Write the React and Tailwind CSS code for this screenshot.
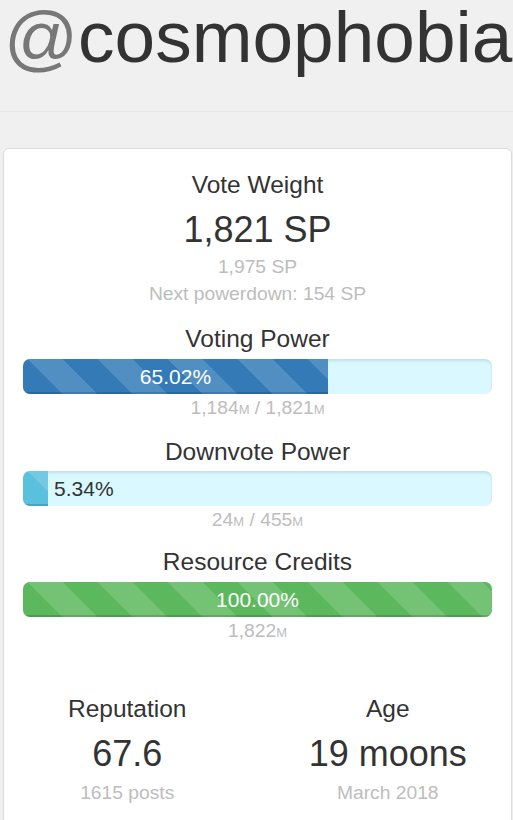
import React from 'react';

const stripes =
  'bg-[linear-gradient(45deg,rgba(255,255,255,.15)_25%,transparent_25%,transparent_50%,rgba(255,255,255,.15)_50%,rgba(255,255,255,.15)_75%,transparent_75%,transparent)] bg-[length:70px_70px] bg-[position:4px_0]';

const Unit = () => <span className="text-[13px]">M</span>;

const Bar = ({ pct, label, color, inside = true }) => (
  <div className="flex h-[35px] w-full overflow-hidden rounded-[7px] bg-[#d9f8ff] shadow-[inset_0_2px_3px_rgba(0,0,0,0.1)]">
    <div
      className={`${color} ${stripes} h-full shrink-0 text-center text-[21px] leading-[35px] text-white shadow-[inset_0_-2px_0_rgba(0,0,0,0.15)]`}
      style={{ width: `${pct}%` }}
    >
      {inside && label}
    </div>
    {!inside && <span className="pl-[6px] text-[21px] leading-[35px] text-[#333]">{label}</span>}
  </div>
);

const Muted = ({ children, className = '' }) => (
  <div className={`text-[19.25px] leading-[27.5px] text-[#bdbdbd] ${className}`}>{children}</div>
);

const Title = ({ children, className = '' }) => (
  <div className={`text-[24.5px] leading-[35px] text-[#333] ${className}`}>{children}</div>
);

const Big = ({ children, className = '' }) => (
  <div className={`text-[36px] leading-[40px] text-[#333] ${className}`}>{children}</div>
);

export default function App() {
  return (
    <div className="min-h-screen overflow-hidden bg-[#f0f0f0] font-['Liberation_Sans',Arial,sans-serif]">
      <h1 className="h-[73px] whitespace-nowrap pl-[4px] text-[73px] leading-[73px] text-[#333]">
        <span className="text-[#777]">@</span>cosmophobia
      </h1>
      <div className="mt-[38px] h-px bg-[#e6e6e6]" />

      <div className="ml-[3px] mr-[1px] mt-[36px] rounded-[6px] border border-[#dcdcdc] bg-white px-[19px] pt-[17.5px] pb-10 text-center shadow-[0_1px_2px_rgba(0,0,0,0.06)]">
        <Title>Vote Weight</Title>
        <Big className="mt-[8px]">1,821 SP</Big>
        <Muted className="mt-[3px]">1,975 SP</Muted>
        <Muted>Next powerdown: 154 SP</Muted>

        <Title className="mt-[13px]">Voting Power</Title>
        <div className="mt-[3px]">
          <Bar pct={65.02} label="65.02%" color="bg-[#337ab7]" />
        </div>
        <Muted>
          1,184<Unit /> / 1,821<Unit />
        </Muted>

        <Title className="mt-[11px]">Downvote Power</Title>
        <div className="mt-[2px]">
          <Bar pct={5.34} label="5.34%" color="bg-[#5bc0de]" inside={false} />
        </div>
        <Muted>
          24<Unit /> / 455<Unit />
        </Muted>

        <Title className="mt-[8px]">Resource Credits</Title>
        <div className="mt-[3px]">
          <Bar pct={100} label="100.00%" color="bg-[#5cb85c]" />
        </div>
        <Muted>
          1,822<Unit />
        </Muted>

        <div className="-mx-[26px] mt-[45px] grid grid-cols-2">
          <div>
            <Title>Reputation</Title>
            <Big className="mt-[8px]">67.6</Big>
            <Muted className="mt-[5px]">1615 posts</Muted>
          </div>
          <div>
            <Title>Age</Title>
            <Big className="mt-[8px]">19 moons</Big>
            <Muted className="mt-[5px]">March 2018</Muted>
          </div>
        </div>
      </div>
    </div>
  );
}
